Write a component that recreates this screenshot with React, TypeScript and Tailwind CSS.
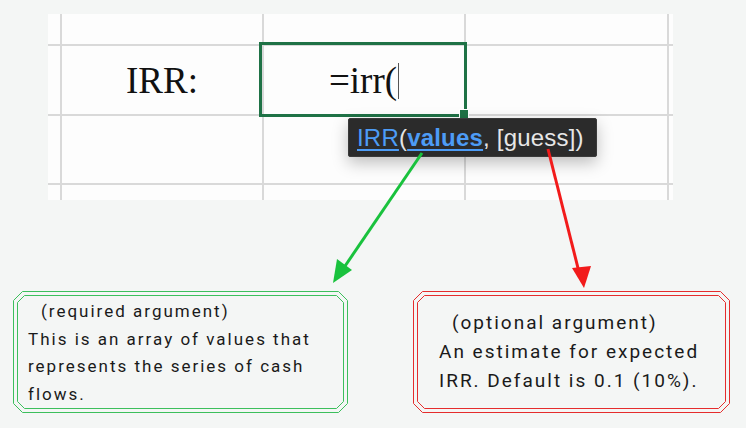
function Frame({ w, h, color }: { w: number; h: number; color: string }) {
  const o = (i: number, c: number) => {
    const a = i + 0.5;
    const r = w - i - 0.5;
    const b = h - i - 0.5;
    return `${a + c},${a} ${r - c},${a} ${r},${a + c} ${r},${b - c} ${r - c},${b} ${a + c},${b} ${a},${b - c} ${a},${a + c}`;
  };
  return (
    <svg className="pointer-events-none absolute left-0 top-0" width={w} height={h}>
      <polygon points={o(0, 9)} fill="none" stroke={color} strokeWidth="1" />
      <polygon points={o(4, 7)} fill="none" stroke={color} strokeWidth="1" />
    </svg>
  );
}

export default function App() {
  return (
    <div className="relative h-[428px] w-[746px] overflow-hidden bg-[#f4f6f5] pl-[48px] pt-[14px] font-['Roboto',sans-serif]">
      <div className="grid w-[625px] grid-cols-[12px_200px_200px_201px_4px] grid-rows-[30px_68px_67px_15px] gap-[2px] bg-[#d9d9d9]">
        {Array.from({ length: 5 }).map((_, i) => (
          <div key={`a${i}`} className="bg-[#fdfdfd]" />
        ))}
        <div className="bg-[#fdfdfd]" />
        <div className="flex items-center justify-center bg-[#fdfdfd] pt-[2px] font-['Liberation_Serif',serif] text-[37px] text-[#111]">IRR:</div>
        <div className="relative flex items-center justify-center bg-[#fdfdfd] pt-[2px] font-['Liberation_Serif',serif] text-[37px] text-[#111]">
          <span className="flex items-center">
            =irr(
            <span className="ml-[1px] inline-block h-[36px] w-[1px] bg-[#555]" />
          </span>
          <div className="absolute -bottom-[3px] -left-[5px] -right-[3px] -top-[4px] border-[3px] border-[#1f7246]" />
          <div className="absolute -bottom-[5px] -right-[5px] h-[10px] w-[10px] border border-white bg-[#1f7246]" />
        </div>
        <div className="bg-[#fdfdfd]" />
        <div className="bg-[#fdfdfd]" />
        {Array.from({ length: 10 }).map((_, i) => (
          <div key={`b${i}`} className="bg-[#fdfdfd]" />
        ))}
      </div>

      <div className="absolute left-[348px] top-[118px] flex h-[39px] w-[249px] items-center rounded-[2px] border border-[#3a3a3a] bg-[#2b2b2b] pl-[8px] font-['Liberation_Sans',sans-serif] text-[24px] tracking-[0.2px] text-[#e6e6e6] shadow-[0_6px_16px_rgba(0,0,0,0.25)]">
        <span className="text-[#4d9cf6] underline decoration-[2px] underline-offset-[3px]">IRR</span>
        <span>(</span>
        <span className="font-bold text-[#4d9cf6] underline decoration-[2px] underline-offset-[3px]">values</span>
        <span>, [guess])</span>
      </div>

      <div className="-ml-[35px] mt-[91px] flex gap-[65px] text-[#1a1a1a]">
        <div className="relative h-[122px] w-[335px] pl-[15px] pr-[20px] pt-[7px] text-[17px] leading-[27.7px] tracking-[2px]">
          <Frame w={335} h={122} color="#3cbf5c" />
          <div className="pl-[13px]">(required argument)</div>
          <div>This is an array of values that represents the series of cash flows.</div>
        </div>
        <div className="relative h-[122px] w-[317px] pl-[26px] pr-[18px] pt-[17px] text-[19px] leading-[29px] tracking-[2px]">
          <Frame w={317} h={122} color="#e52d2d" />
          <div className="pl-[13px]">(optional argument)</div>
          <div>An estimate for expected IRR. Default is 0.1 (10%).</div>
        </div>
      </div>

      <svg className="pointer-events-none absolute left-0 top-0" width="746" height="428">
        <line x1="422" y1="153" x2="343" y2="269" stroke="#19c23d" strokeWidth="3" />
        <polygon points="333,283 337,259 352,270" fill="#19c23d" />
        <line x1="548" y1="149" x2="579" y2="272" stroke="#f21b1b" strokeWidth="3" />
        <polygon points="584,288 572,268 591,266" fill="#f21b1b" />
      </svg>
    </div>
  );
}
